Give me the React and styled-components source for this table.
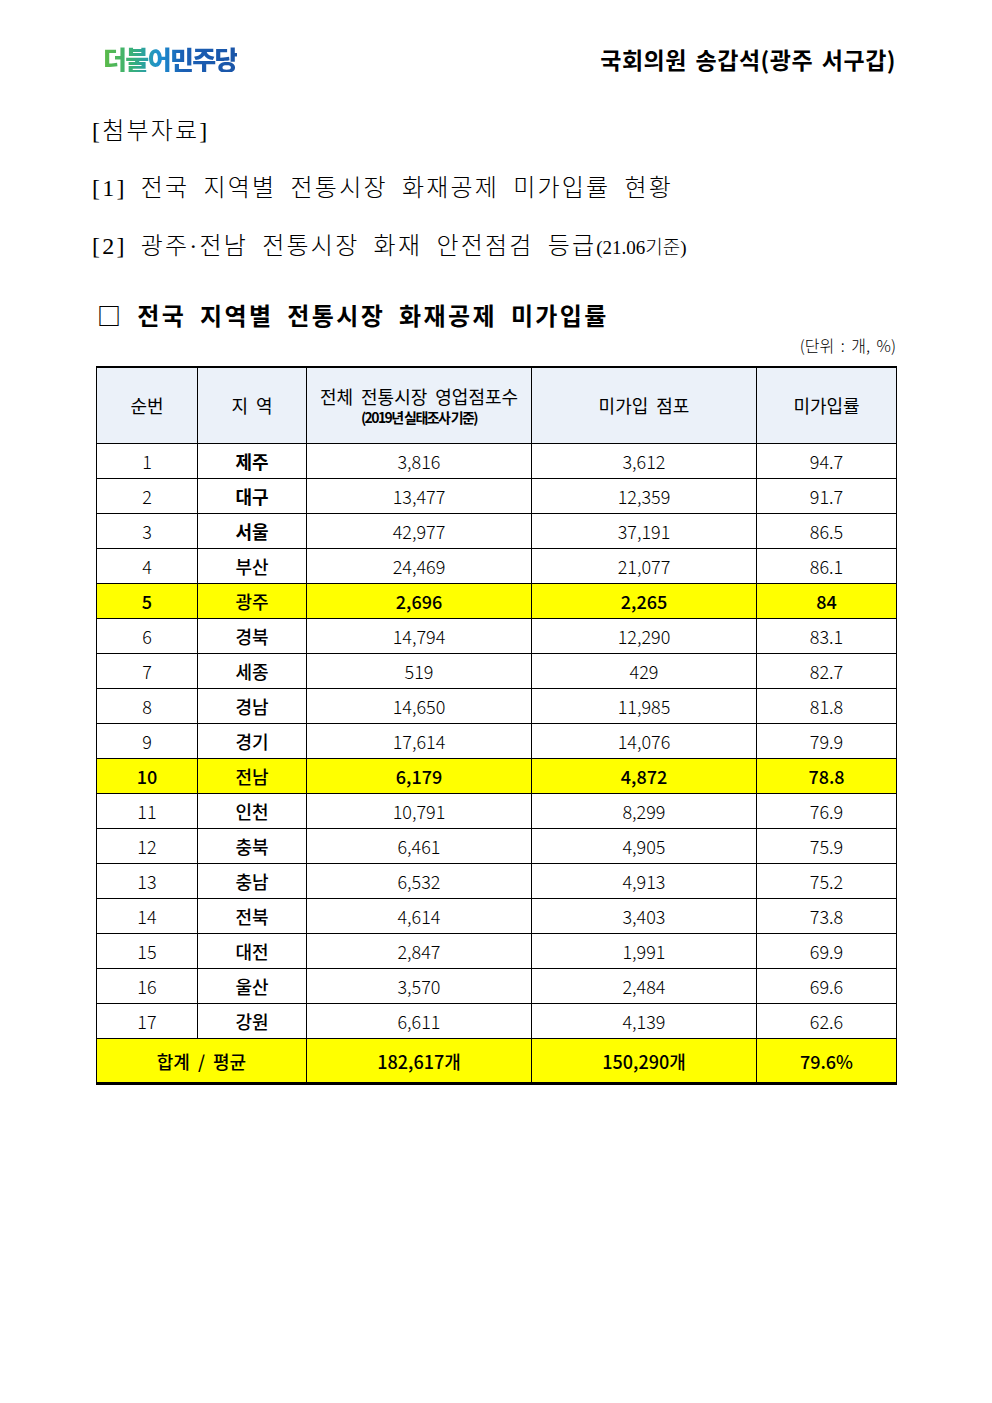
import React from "react";
import styled, { createGlobalStyle } from "styled-components";

const GlobalStyle = createGlobalStyle`
  html, body {
    margin: 0;
    padding: 0;
    background: #ffffff;
  }
  body {
    font-family: "Noto Sans CJK KR", "Noto Sans", sans-serif;
    color: #000;
  }
`;

const Page = styled.div`
  width: 992px;
  min-height: 1403px;
  box-sizing: border-box;
  padding: 44px 96px 0 92px;
`;

const Header = styled.header`
  display: flex;
  justify-content: space-between;
  align-items: center;
  padding-left: 11px;
  height: 30px;
`;

const Logo = styled.div`
  font-family: "Noto Sans CJK KR", sans-serif;
  font-weight: 900;
  font-size: 26px;
  letter-spacing: -1.6px;
  line-height: 1;
  background: linear-gradient(90deg, #5dbb46 0%, #38b07a 22%, #1d8fd0 42%, #1a5fb4 60%, #1a55a8 100%);
  -webkit-background-clip: text;
  background-clip: text;
  color: transparent;
`;

const Member = styled.div`
  font-family: "Noto Sans CJK KR", sans-serif;
  font-weight: 700;
  font-size: 23px;
  letter-spacing: 0.5px;
  word-spacing: 3px;
  line-height: 1;
`;

const Attach = styled.div`
  font-family: "Liberation Serif", "Noto Sans CJK KR", serif;
  font-weight: 300;
  font-size: 24px;
  letter-spacing: 2.2px;
  word-spacing: 6px;
  line-height: 1;
  margin-top: ${(p) => p.$top}px;
`;

const Small = styled.span`
  font-size: 19px;
  letter-spacing: 0;
  word-spacing: 0;
`;

const Title = styled.h2`
  margin: 45px 0 0 5px;
  font-family: "Noto Sans CJK KR", sans-serif;
  font-weight: 700;
  font-size: 24px;
  letter-spacing: 2.4px;
  word-spacing: 6px;
  line-height: 1;
`;

const Unit = styled.div`
  text-align: right;
  font-weight: 300;
  font-size: 16px;
  word-spacing: 3px;
  margin-top: 10px;
  line-height: 1;
`;

const Table = styled.table`
  margin: 13px 0 0 4px;
  width: 800px;
  border-collapse: collapse;
  table-layout: fixed;
  border-top: 2px solid #000;
  border-bottom: 3px solid #000;
  border-left: 1px solid #000;
  border-right: 1px solid #000;
`;

const HeadCell = styled.th`
  height: 75px;
  background: #ebf1f9;
  border: 1px solid #000;
  border-top: none;
  font-weight: 400;
  font-size: 18px;
  word-spacing: 4px;
  line-height: 1.35;
  padding: 0;
`;

const SubHead = styled.span`
  display: block;
  font-weight: 700;
  font-size: 14px;
  letter-spacing: -1.6px;
  word-spacing: 0;
`;

const Row = styled.tr`
  background: ${(p) => (p.$hl ? "#ffff00" : "#ffffff")};
`;

const Cell = styled.td`
  height: 34px;
  border: 1px solid #000;
  text-align: center;
  padding: 0;
  font-size: 18px;
  font-weight: ${(p) => (p.$hl ? 500 : 300)};
  line-height: 1;
`;

const Region = styled(Cell)`
  font-weight: ${(p) => (p.$strong ? 700 : 500)};
`;

const TotalCell = styled.td`
  height: 43px;
  border: 1px solid #000;
  border-bottom: none;
  background: #ffff00;
  text-align: center;
  padding: 0;
  font-size: 18px;
  font-weight: 500;
  word-spacing: 4px;
`;

const rows = [
  ["제주", "3,816", "3,612", "94.7"],
  ["대구", "13,477", "12,359", "91.7"],
  ["서울", "42,977", "37,191", "86.5"],
  ["부산", "24,469", "21,077", "86.1"],
  ["광주", "2,696", "2,265", "84"],
  ["경북", "14,794", "12,290", "83.1"],
  ["세종", "519", "429", "82.7"],
  ["경남", "14,650", "11,985", "81.8"],
  ["경기", "17,614", "14,076", "79.9"],
  ["전남", "6,179", "4,872", "78.8"],
  ["인천", "10,791", "8,299", "76.9"],
  ["충북", "6,461", "4,905", "75.9"],
  ["충남", "6,532", "4,913", "75.2"],
  ["전북", "4,614", "3,403", "73.8"],
  ["대전", "2,847", "1,991", "69.9"],
  ["울산", "3,570", "2,484", "69.6"],
  ["강원", "6,611", "4,139", "62.6"],
];

const highlighted = ["광주", "전남"];

export default function App() {
  return (
    <Page>
      <GlobalStyle />
      <Header>
        <Logo>더불어민주당</Logo>
        <Member>국회의원 송갑석(광주 서구갑)</Member>
      </Header>

      <Attach $top={45}>[첨부자료]</Attach>
      <Attach $top={33}>[1] 전국 지역별 전통시장 화재공제 미가입률 현황</Attach>
      <Attach $top={34}>
        [2] 광주·전남 전통시장 화재 안전점검 등급<Small>(21.06기준)</Small>
      </Attach>

      <Title>□ 전국 지역별 전통시장 화재공제 미가입률</Title>
      <Unit>(단위 : 개, %)</Unit>

      <Table>
        <colgroup>
          <col style={{ width: 101 }} />
          <col style={{ width: 109 }} />
          <col style={{ width: 225 }} />
          <col style={{ width: 225 }} />
          <col style={{ width: 140 }} />
        </colgroup>
        <thead>
          <tr>
            <HeadCell>순번</HeadCell>
            <HeadCell>지 역</HeadCell>
            <HeadCell>
              전체 전통시장 영업점포수
              <SubHead>(2019년 실태조사 기준)</SubHead>
            </HeadCell>
            <HeadCell>미가입 점포</HeadCell>
            <HeadCell>미가입률</HeadCell>
          </tr>
        </thead>
        <tbody>
          {rows.map(([region, total, missing, rate], i) => {
            const hl = highlighted.includes(region);
            return (
              <Row key={region} $hl={hl}>
                <Cell $hl={hl}>{i + 1}</Cell>
                <Region $hl={hl} $strong={i < 3}>{region}</Region>
                <Cell $hl={hl}>{total}</Cell>
                <Cell $hl={hl}>{missing}</Cell>
                <Cell $hl={hl}>{rate}</Cell>
              </Row>
            );
          })}
          <tr>
            <TotalCell colSpan={2}>합계 / 평균</TotalCell>
            <TotalCell>182,617개</TotalCell>
            <TotalCell>150,290개</TotalCell>
            <TotalCell>79.6%</TotalCell>
          </tr>
        </tbody>
      </Table>
    </Page>
  );
}
